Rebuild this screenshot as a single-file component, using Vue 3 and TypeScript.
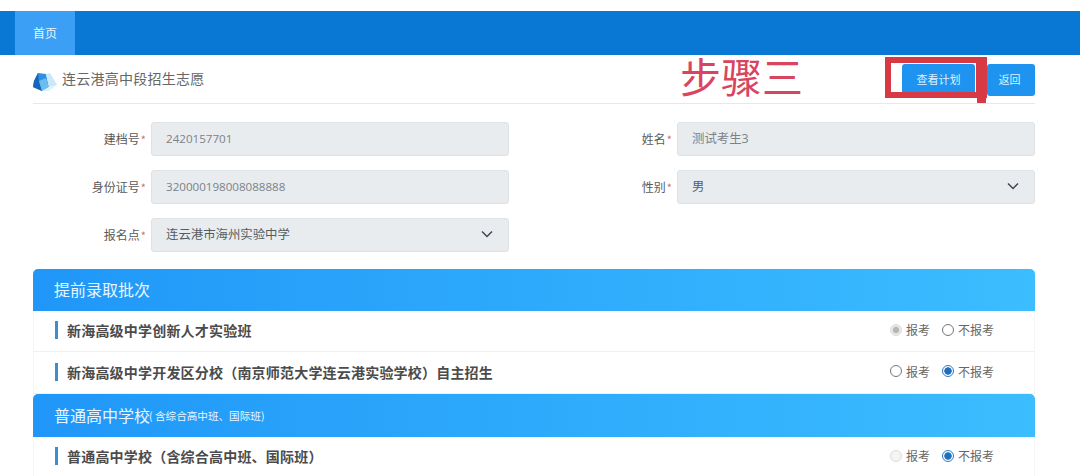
<script setup lang="ts">
interface Field { label: string; value: string; select?: boolean }
interface Row { name: string; first: 'on' | 'off' | 'disabled-on' | 'disabled-off'; second: 'on' | 'off' }
const left: Field[] = [
  { label: '建档号', value: '2420157701' },
  { label: '身份证号', value: '320000198008088888' },
  { label: '报名点', value: '连云港市海州实验中学', select: true },
]
const right: Field[] = [
  { label: '姓名', value: '测试考生3' },
  { label: '性别', value: '男', select: true },
]
const batch1: Row[] = [
  { name: '新海高级中学创新人才实验班', first: 'disabled-on', second: 'off' },
  { name: '新海高级中学开发区分校（南京师范大学连云港实验学校）自主招生', first: 'off', second: 'on' },
]
const batch2: Row[] = [
  { name: '普通高中学校（含综合高中班、国际班）', first: 'disabled-off', second: 'on' },
]
const isDigits = (v: string): boolean => /^\d+$/.test(v)
</script>

<template>
  <div class="page">
    <nav class="nav"><span class="tab">首页</span></nav>
    <main class="content">
      <header class="title-row">
        <div class="brand">
          <svg class="logo" width="24" height="20" viewBox="0 0 24 20">
            <path d="M5 1 L13 2 L16 15 L9 19 L0 15 L1 9 Z" fill="#2f8fe0" />
            <path d="M0 15 L1 9 L5 1 L6 9 L9 19 Z" fill="#1566b8" />
            <path d="M6 9 L13 6 L16 15 L9 19 Z" fill="#6dbcf0" />
            <path d="M13 2 L17 1 L24 13 L16 15 Z" fill="#c9e8f9" />
            <path d="M9 19 L16 15 L24 13 L16 19 Z" fill="#dff1fb" />
          </svg>
          <span class="brand-text">连云港高中段招生志愿</span>
        </div>
        <div class="actions">
          <button class="btn btn-plan">查看计划</button>
          <button class="btn btn-back">返回</button>
        </div>
      </header>

      <section class="form">
        <div class="col">
          <div v-for="f in left" :key="f.label" class="field">
            <label class="label">{{ f.label }}<i>*</i></label>
            <div class="control" :class="{ dark: f.select, cjk: !isDigits(f.value) }">
              <span>{{ f.value }}</span>
              <svg v-if="f.select" width="12" height="8" viewBox="0 0 12 8"><path d="M1 1.5 L6 6.5 L11 1.5" fill="none" stroke="#3f474e" stroke-width="1.5" /></svg>
            </div>
          </div>
        </div>
        <div class="col">
          <div v-for="f in right" :key="f.label" class="field">
            <label class="label">{{ f.label }}<i>*</i></label>
            <div class="control" :class="{ dark: f.select, cjk: !isDigits(f.value) }">
              <span>{{ f.value }}</span>
              <svg v-if="f.select" width="12" height="8" viewBox="0 0 12 8"><path d="M1 1.5 L6 6.5 L11 1.5" fill="none" stroke="#3f474e" stroke-width="1.5" /></svg>
            </div>
          </div>
        </div>
      </section>

      <section class="panel">
        <h2 class="panel-head">提前录取批次</h2>
        <div v-for="r in batch1" :key="r.name" class="row">
          <span class="row-name">{{ r.name }}</span>
          <div class="radios">
            <span class="radio-item"><span class="radio" :class="r.first"></span>报考</span>
            <span class="radio-item"><span class="radio" :class="r.second"></span>不报考</span>
          </div>
        </div>
        <h2 class="panel-head second">普通高中学校<small>( 含综合高中班、国际班)</small></h2>
        <div v-for="r in batch2" :key="r.name" class="row">
          <span class="row-name">{{ r.name }}</span>
          <div class="radios">
            <span class="radio-item"><span class="radio" :class="r.first"></span>报考</span>
            <span class="radio-item"><span class="radio" :class="r.second"></span>不报考</span>
          </div>
        </div>
      </section>
    </main>

    <div class="note">步骤三</div>
    <div class="mark"></div>
    <div class="mark-stub"></div>
  </div>
</template>

<style>
html, body { margin: 0; background: #fff; overflow: hidden; }
</style>

<style scoped>
.page {
  position: relative;
  width: 1080px;
  height: 476px;
  overflow: hidden;
  padding-top: 11px;
  box-sizing: border-box;
  background: #fff;
  font-family: "Noto Sans CJK SC", "Open Sans", sans-serif;
  color: #555;
}
.nav { height: 44px; background: #0878d4; padding-left: 15px; display: flex; }
.tab {
  width: 60px;
  background: #3ba0f5;
  color: #e8f4ff;
  font-size: 12px;
  padding-bottom: 1px;
  display: flex;
  align-items: center;
  justify-content: center;
}
.content { margin: 0 45px 0 33px; }
.title-row {
  height: 48px;
  border-bottom: 1px solid #e8e8e8;
  display: flex;
  justify-content: space-between;
  align-items: flex-start;
}
.brand { display: flex; align-items: center; height: 48px; }
.logo { margin-right: 4px; margin-top: 5px; }
.brand-text { font-size: 14px; letter-spacing: 0.25px; color: #666; margin-left: 1px; margin-top: -3px; }
.actions { display: flex; gap: 12px; padding-top: 9px; }
.btn {
  height: 32px;
  border: 0;
  border-radius: 3px;
  background: #1f93f0;
  color: #dff1ff;
  font: 11px "Noto Sans CJK SC", sans-serif;
  padding: 0 0 3px;
}
.btn-plan { width: 73px; }
.btn-back { width: 48px; padding-right: 3px; }
.form {
  display: grid;
  grid-template-columns: 476px 358px;
  column-gap: 168px;
  padding-top: 18px;
  height: 147px;
  box-sizing: content-box;
}
.col { display: flex; flex-direction: column; gap: 14px; }
.field { display: flex; align-items: center; height: 34px; }
.label {
  width: 118px;
  flex: none;
  box-sizing: border-box;
  padding-right: 5px;
  padding-bottom: 2px;
  text-align: right;
  font-size: 12px;
  color: #5a5a5a;
}
.col:last-child .field { margin-left: -118px; }
.label i { color: #c9736f; font-style: normal; font-size: 11px; margin-left: 1px; }
.control {
  flex: 1;
  height: 34px;
  box-sizing: border-box;
  background: #e9ecef;
  border: 1px solid #dfe2e5;
  border-radius: 3px;
  padding: 0 15px 2px 14px;
  display: flex;
  align-items: center;
  justify-content: space-between;
  font-family: "Open Sans", "Noto Sans CJK SC", sans-serif;
  font-size: 11.6px;
  color: #7b8288;
}
.control.cjk { font-size: 12.4px; }
.control.dark { color: #555c63; }
.panel { margin-top: 0; }
.panel-head {
  margin: 0;
  height: 42px;
  padding: 0 0 2px 21px;
  box-sizing: border-box;
  display: flex;
  align-items: center;
  border-radius: 5px 5px 0 0;
  background: linear-gradient(90deg, #2097f8, #3bbdff);
  color: #eaf6ff;
  font-size: 16px;
  font-weight: 400;
}
.panel-head.second { height: 43px; }
.panel-head small { font-size: 10.6px; margin-left: -1px; margin-top: 2px; }
.row {
  height: 41px;
  box-sizing: border-box;
  border-bottom: 1px solid #eef0f2;
  border-left: 1px solid #f5f6f7;
  border-right: 1px solid #f5f6f7;
  display: flex;
  align-items: center;
  justify-content: space-between;
  padding: 0 40px 2px 21px;
  width: 1002px;
}
.row:nth-of-type(2) { height: 42px; }
.row-name {
  border-left: 3px solid #3a8fd0;
  padding-left: 9px;
  font-size: 14px;
  letter-spacing: 0.2px;
  font-weight: 700;
  color: #4b4b4b;
  line-height: 18px;
  height: 18px;
  display: flex;
  align-items: center;
}
.radios { display: flex; gap: 12px; font-size: 12px; color: #666; margin-left: -1px; }
.radio-item { display: flex; align-items: center; gap: 4px; line-height: 14px; }
.radio {
  width: 12px;
  height: 12px;
  box-sizing: border-box;
  border-radius: 50%;
  border: 1px solid #777;
  background: #fff;
  margin-top: -1px;
}
.radio.on {
  border: 1px solid #2a78c8;
  background: radial-gradient(circle, #1f6fc0 0 3.4px, #fff 4px);
}
.radio.disabled-on {
  border: 1px solid #ddd;
  background: radial-gradient(circle, #b5b5b5 0 2.8px, #e6e6e6 3.4px);
}
.radio.disabled-off { border: 1px solid #ddd; background: #f4f4f4; }
.note {
  position: absolute;
  left: 680px;
  top: 47px;
  font-size: 41px;
  font-weight: 400;
  line-height: 56px;
  color: #d9455f;
  font-family: "Noto Sans CJK SC", sans-serif;
}
.mark {
  position: absolute;
  left: 885px;
  top: 57px;
  width: 102px;
  height: 41px;
  box-sizing: border-box;
  border-style: solid;
  border-color: #d83a45;
  border-width: 6px 11px 6px 6px;
}
.mark-stub {
  position: absolute;
  left: 977px;
  top: 96px;
  width: 9px;
  height: 7px;
  background: #d83a45;
}
</style>
